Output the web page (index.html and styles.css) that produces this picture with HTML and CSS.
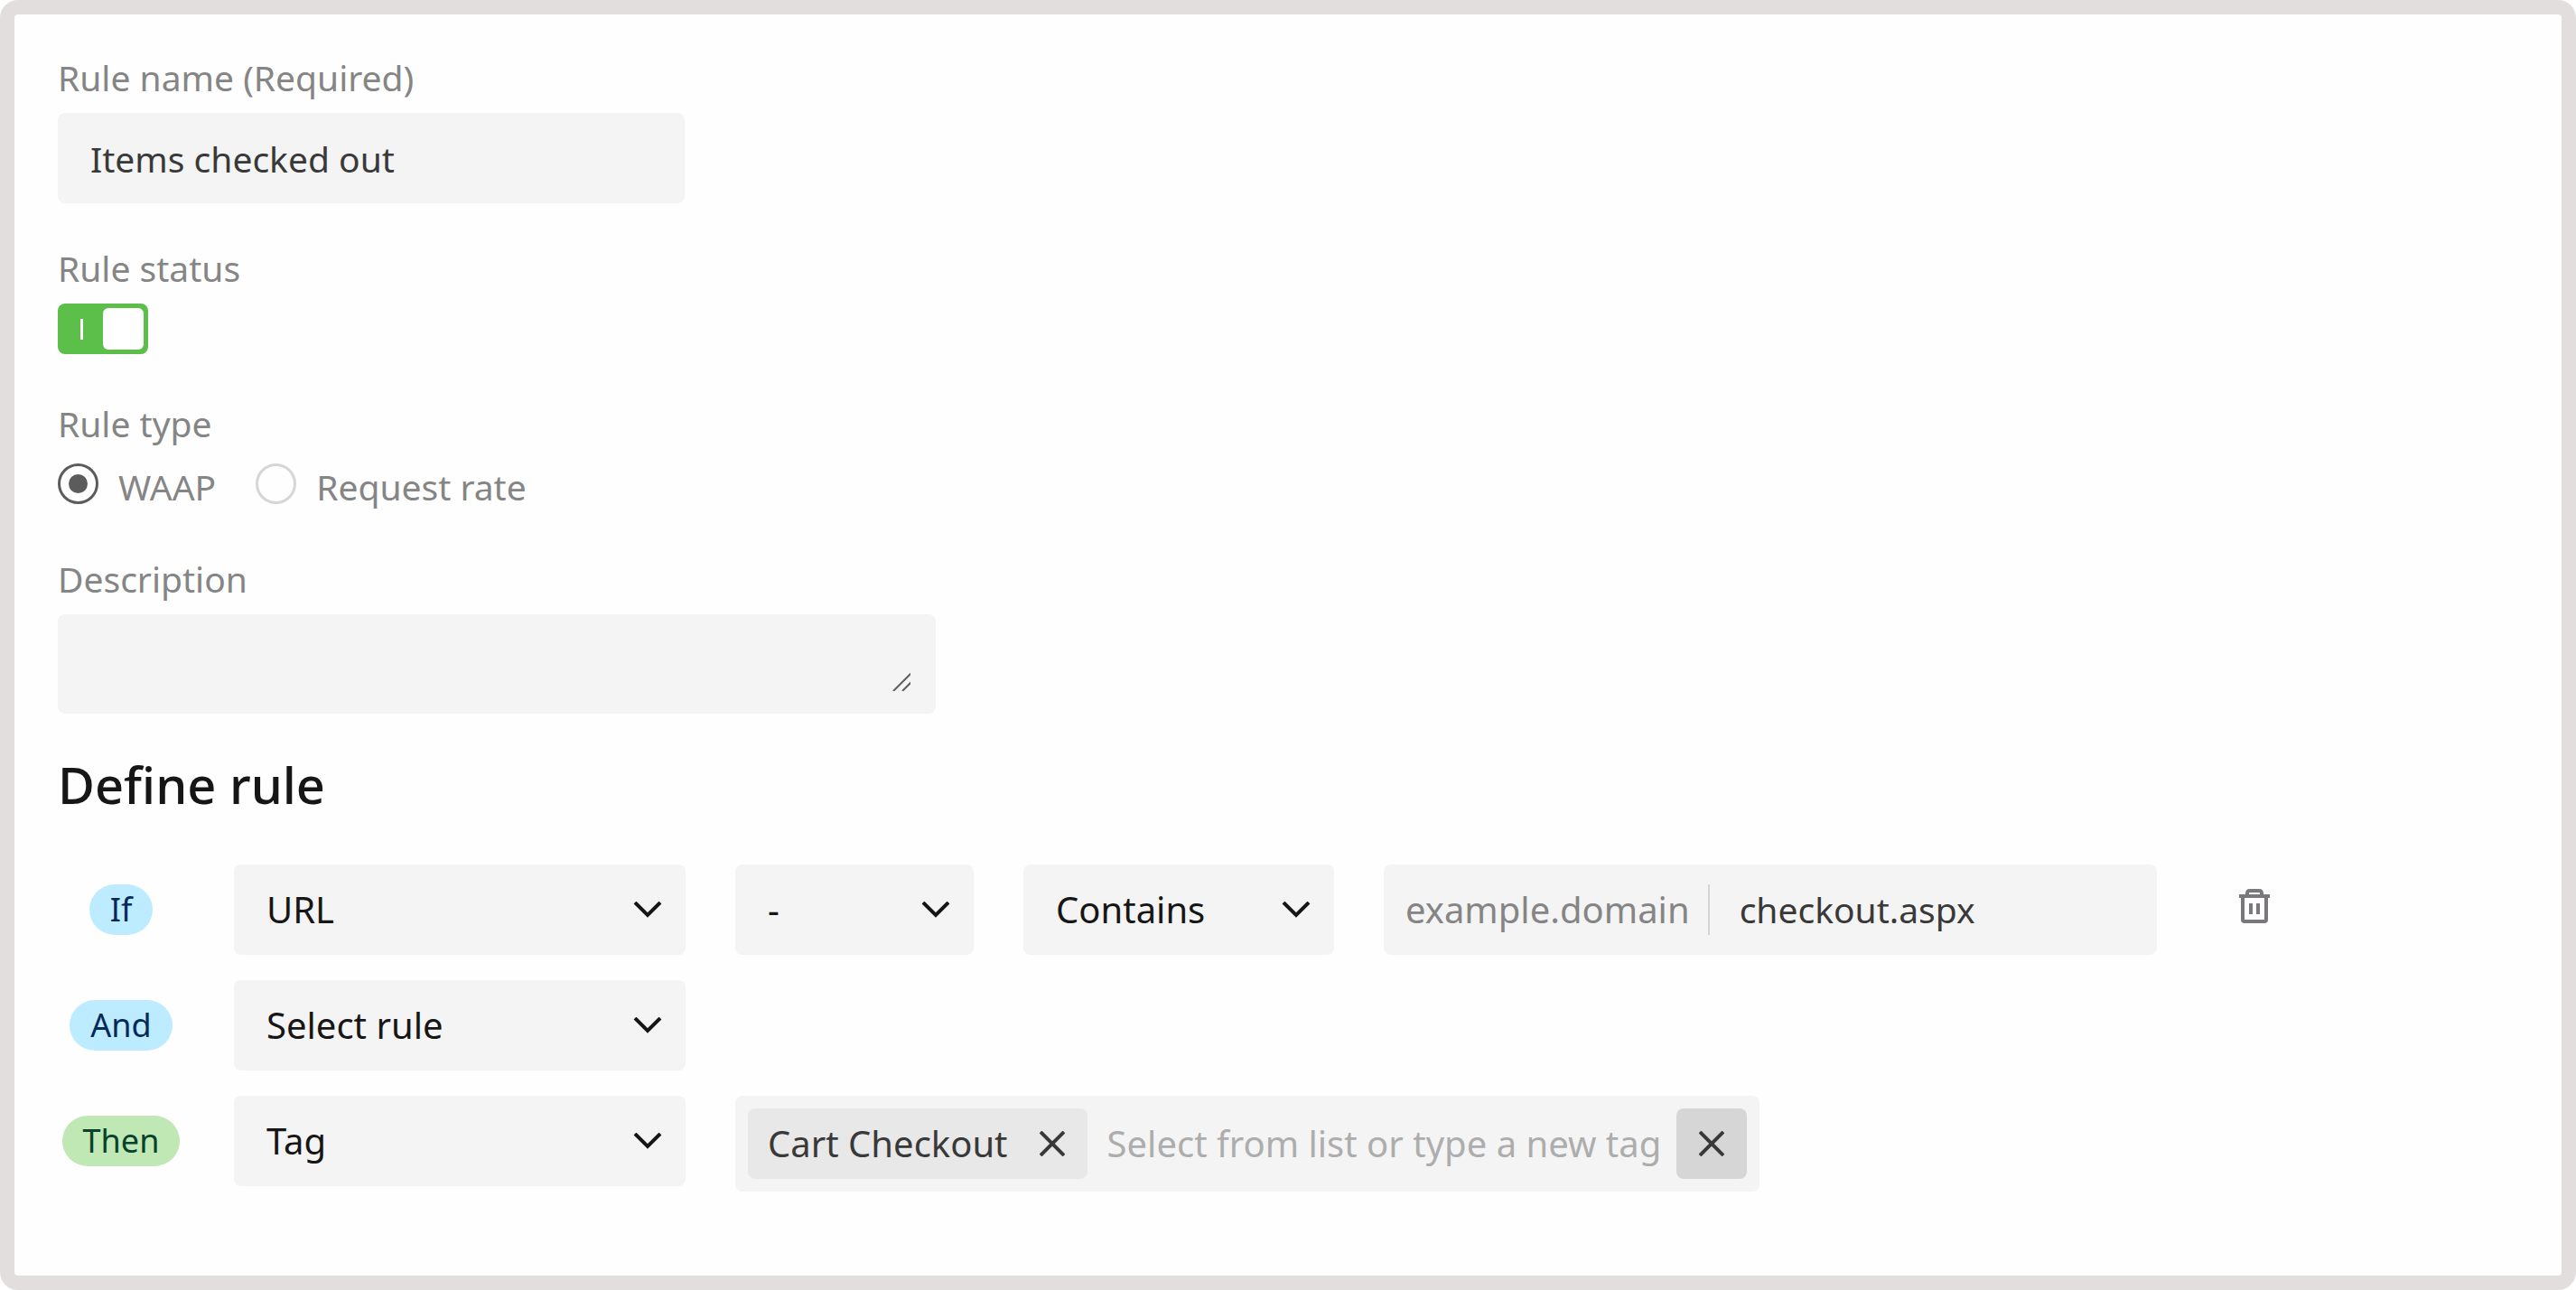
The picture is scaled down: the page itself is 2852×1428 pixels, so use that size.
FILE: index.html
```html
<!DOCTYPE html>
<html lang="en">
<head>
    <meta charset="UTF-8">
    <meta name="viewport" content="width=device-width, initial-scale=1.0">
    <title>Edit rule</title>
    <link rel="stylesheet" href="styles.css">
</head>
<body>

    <form class="rule-form">
        <div class="field">
            <label for="ruleName">Rule name (Required)</label>
            <input class="text-input" type="text" id="ruleName" name="ruleName" value="Items checked out" required>
        </div>

        <div class="field">
            <label for="ruleStatus">Rule status</label>
            <div class="control-line">
                <input class="toggle" type="checkbox" id="ruleStatus" name="ruleStatus" checked>
            </div>
        </div>

        <fieldset class="field">
            <legend>Rule type</legend>
            <div class="control-line">
                <label class="radio-option" for="typeWaap">
                    <input class="radio" type="radio" id="typeWaap" name="ruleType" value="waap" checked>
                    WAAP
                </label>
                <label class="radio-option" for="typeRate">
                    <input class="radio" type="radio" id="typeRate" name="ruleType" value="rate">
                    Request rate
                </label>
            </div>
        </fieldset>

        <div class="field">
            <label for="description">Description</label>
            <div class="textarea-wrap">
                <textarea class="text-area" id="description" name="description"></textarea>
                <svg class="grip" viewBox="0 0 20 20" aria-hidden="true"><path d="M1 20L21 0M11 20L21 10"/></svg>
            </div>
        </div>

        <h2>Define rule</h2>

        <div class="rules">
            <!-- condition -->
            <div class="rule-row">
                <div class="badge-cell"><span class="badge">If</span></div>
                <select class="select field-select" aria-label="Condition field">
                    <option>URL</option>
                </select>
                <select class="select negate-select" aria-label="Negate">
                    <option>-</option>
                </select>
                <select class="select match-select" aria-label="Match type">
                    <option>Contains</option>
                </select>
                <div class="url-box">
                    <label class="url-prefix" for="urlPath">example.domain</label>
                    <input class="url-input" type="text" id="urlPath" name="urlPath" value="checkout.aspx">
                </div>
                <button class="delete-btn" type="button" aria-label="Delete condition">
                    <svg viewBox="0 0 36 38" aria-hidden="true">
                        <path d="M1 8H35M5 8V34Q5 36 7 36H29Q31 36 31 34V8M10 8V5Q10 2 13 2H23Q26 2 26 5V8"/>
                        <path d="M14 16V28M22 16V28"/>
                    </svg>
                </button>
            </div>

            <!-- additional condition -->
            <div class="rule-row">
                <div class="badge-cell"><span class="badge">And</span></div>
                <select class="select field-select" aria-label="Additional condition">
                    <option>Select rule</option>
                </select>
            </div>

            <!-- action -->
            <div class="rule-row">
                <div class="badge-cell"><span class="badge badge-then">Then</span></div>
                <select class="select field-select" aria-label="Action">
                    <option>Tag</option>
                </select>
                <div class="tag-box">
                    <span class="tag">
                        Cart Checkout
                        <button class="icon-btn" type="button" aria-label="Remove Cart Checkout">
                            <svg viewBox="0 0 28 28" aria-hidden="true"><path d="M1 1L27 27M27 1L1 27"/></svg>
                        </button>
                    </span>
                    <input class="tag-input" type="text" placeholder="Select from list or type a new tag" aria-label="Tags">
                    <button class="icon-btn clear-btn" type="button" aria-label="Clear tags">
                        <svg viewBox="0 0 28 28" aria-hidden="true"><path d="M1 1L27 27M27 1L1 27"/></svg>
                    </button>
                </div>
            </div>
        </div>
    </form>

</body>
</html>
```

FILE: styles.css
```css
* {
    box-sizing: border-box;
}

body {
    margin: 0;
    background-color: #ffffff;
    font-family: "Noto Sans", sans-serif;
    font-size: 39px;
    line-height: 56px;
    color: #161616;
}

input,
select,
textarea,
button {
    margin: 0;
    padding: 0;
    border: none;
    font: inherit;
    color: inherit;
    background: none;
}

svg {
    display: block;
    fill: none;
}

.rule-form {
    min-height: 100vh;
    padding: 42px 48px;
    border: 16px solid #e2dede;
    border-radius: 20px;
    background-color: #fefefe;
}

/* labelled fields */
.field {
    margin: 0 0 44px;
    padding: 0;
    border: none;
    color: #858585;
}

.field > label,
.field > legend {
    display: block;
    padding: 0;
    margin-bottom: 11px;
}

.text-input {
    display: block;
    width: 100%;
    max-width: 694px;
    height: 100px;
    padding: 0 36px;
    border-radius: 8px;
    background-color: #f4f4f4;
    color: #393939;
}

.control-line {
    display: flex;
    align-items: flex-start;
    gap: 44px;
    min-height: 61px;
}

.toggle {
    appearance: none;
    display: flex;
    align-items: center;
    justify-content: space-between;
    width: 100px;
    height: 56px;
    padding: 5px 5px 5px 25px;
    border-radius: 8px;
    background-color: #5bbf4a;
}

.toggle::before {
    content: "";
    width: 3px;
    height: 23px;
    background-color: #ffffff;
}

.toggle::after {
    content: "";
    width: 45px;
    height: 46px;
    border-radius: 6px;
    background-color: #ffffff;
}

.radio-option {
    display: flex;
    align-items: flex-start;
    gap: 22px;
    line-height: 61px;
}

.radio {
    appearance: none;
    display: grid;
    place-items: center;
    width: 45px;
    height: 45px;
    margin-top: 5px;
    border: 3px solid #d6d6d6;
    border-radius: 50%;
}

.radio:checked {
    border-color: #5c5c5c;
}

.radio:checked::before {
    content: "";
    width: 21px;
    height: 21px;
    border-radius: 50%;
    background-color: #5c5c5c;
}

.textarea-wrap {
    position: relative;
    max-width: 972px;
}

.text-area {
    display: block;
    width: 100%;
    height: 110px;
    padding: 24px 36px;
    border-radius: 8px;
    background-color: #f4f4f4;
    color: #393939;
    resize: none;
}

.grip {
    position: absolute;
    right: 28px;
    bottom: 25px;
    width: 20px;
    height: 20px;
    stroke: #5c5c5c;
    stroke-width: 2;
}

h2 {
    margin: 0 0 55px;
    font-size: 56px;
    line-height: 68px;
    font-weight: 500;
}

/* rule builder */
.rules {
    display: flex;
    flex-direction: column;
    gap: 28px;
    font-size: 40px;
}

.rule-row {
    display: flex;
    align-items: flex-start;
    gap: 55px;
}

.badge-cell {
    display: flex;
    align-items: center;
    justify-content: center;
    flex: none;
    width: 140px;
    height: 100px;
}

.badge {
    padding: 0 23px;
    border-radius: 28px;
    background-color: #bdebff;
    color: #06295a;
    font-size: 36px;
}

.badge-then {
    background-color: #c0e8b4;
    color: #08422a;
}

.select {
    appearance: none;
    height: 100px;
    padding: 0 80px 0 36px;
    border-radius: 8px;
    background: #f4f4f4 url("data:image/svg+xml,%3Csvg xmlns='http://www.w3.org/2000/svg' width='32' height='18' fill='none' stroke='%23161616' stroke-width='4'%3E%3Cpath d='M2 1l14 14L30 1'/%3E%3C/svg%3E") no-repeat right 26px center;
}

.field-select {
    flex: 0 1 500px;
}

.negate-select {
    flex: 0 1 264px;
}

.match-select {
    flex: 0 1 344px;
}

.url-box {
    display: flex;
    align-items: center;
    flex: 0 1 856px;
    min-width: 0;
    height: 100px;
    padding: 0 24px;
    border-radius: 8px;
    background-color: #f4f4f4;
}

.url-prefix {
    padding-right: 20px;
    border-right: 2px solid #d6d6d6;
    color: #858585;
}

.url-input {
    flex: 1;
    min-width: 0;
    padding-left: 33px;
    font-size: 39px;
    color: #393939;
}

.delete-btn {
    align-self: center;
    padding: 0 35px 8px;
    cursor: pointer;
}

.delete-btn svg {
    width: 36px;
    height: 38px;
    stroke: #7a777d;
    stroke-width: 4;
}

.tag-box {
    display: flex;
    align-items: center;
    flex: 0 1 1134px;
    min-width: 0;
    padding: 14px;
    border-radius: 8px;
    background-color: #f4f4f4;
}

.tag {
    display: flex;
    align-items: center;
    gap: 10px;
    flex: none;
    height: 78px;
    padding-left: 22px;
    border-radius: 8px;
    background-color: #e8e8e8;
    color: #393939;
}

.tag-input {
    flex: 1;
    min-width: 0;
    padding: 0 12px 0 22px;
}

.tag-input::placeholder {
    color: #adadad;
    opacity: 1;
}

.icon-btn {
    display: grid;
    place-items: center;
    flex: none;
    width: 78px;
    height: 78px;
    border-radius: 8px;
    cursor: pointer;
}

.icon-btn svg {
    width: 28px;
    height: 28px;
    stroke: #393939;
    stroke-width: 4;
}

.clear-btn {
    background-color: #d6d6d6;
}
```
